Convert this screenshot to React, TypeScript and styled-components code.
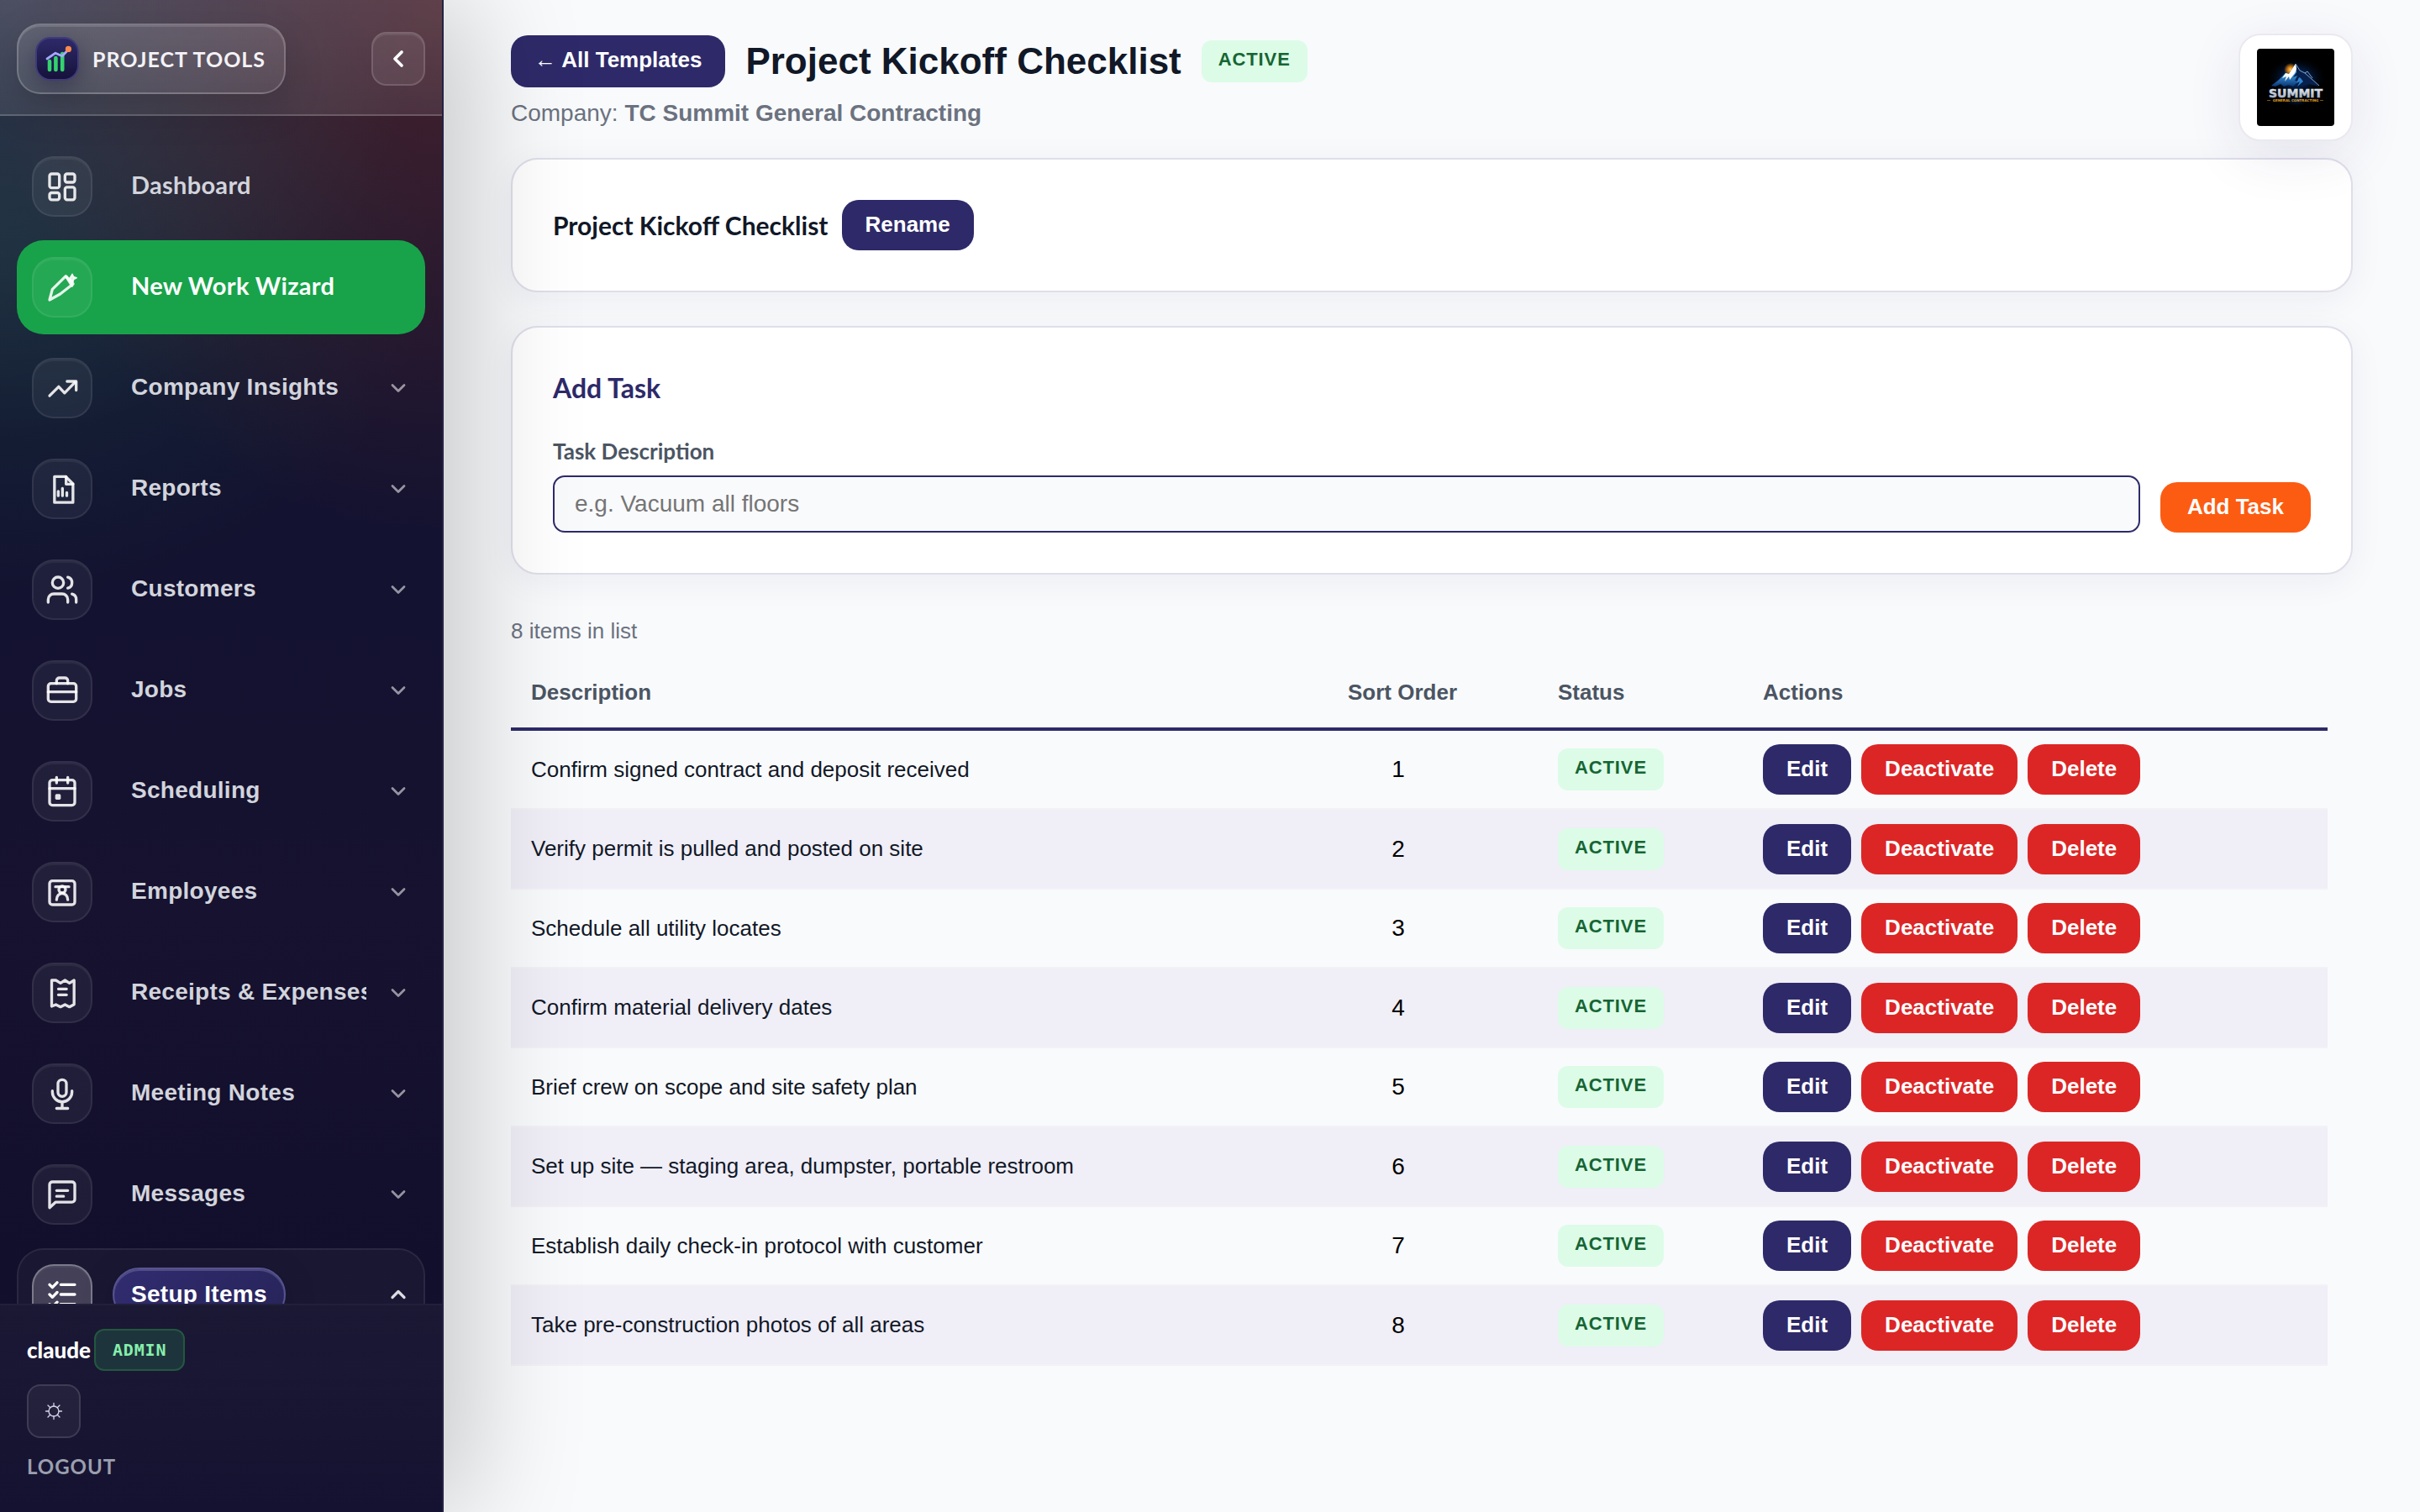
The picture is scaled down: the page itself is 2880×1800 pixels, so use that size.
import React from "react";
import styled, { createGlobalStyle, css } from "styled-components";

const sans = `"Liberation Sans", Arial, sans-serif`;
const display = `Lato, "Liberation Sans", sans-serif`;
const mono = `"DejaVu Sans Mono", monospace`;
const indigo = "#2e2a69";

const GlobalStyle = createGlobalStyle`
  *, *::before, *::after { box-sizing: border-box; }
  body { margin: 0; background: #f9fafc; color: #111827; font-family: ${sans}; }
  h1, h2, p { margin: 0; }
  button, input { font: inherit; }
`;

/* ---------- Shell ---------- */

const Shell = styled.div`
  display: flex;
  min-height: 100vh;
`;

const Sidebar = styled.aside`
  position: sticky;
  top: 0;
  z-index: 2;
  flex: 0 0 528px;
  min-width: 0;
  display: flex;
  flex-direction: column;
  height: 100vh;
  border-right: 2px solid #242245;
  background:
    radial-gradient(ellipse 500px 520px at 0 0, rgba(255, 255, 255, 0.11), transparent 100%),
    radial-gradient(ellipse 540px 640px at 100% 0, rgba(255, 92, 32, 0.21), transparent 100%),
    radial-gradient(ellipse 520px 420px at 0 300px, rgba(34, 190, 110, 0.13), transparent 100%),
    linear-gradient(180deg, #131230 0, #131230 720px, #16122f 60%, #120f2c 84%, #151231 100%);
  box-shadow: 32px 0 128px rgba(0, 0, 0, 0.2);
`;

const SidebarHeader = styled.div`
  display: flex;
  align-items: center;
  justify-content: space-between;
  padding: 28px 20px 24px;
  border-bottom: 2px solid rgba(255, 255, 255, 0.14);
  background: linear-gradient(180deg, rgba(255, 255, 255, 0.14), rgba(255, 255, 255, 0.09));
`;

const Brand = styled.a`
  display: flex;
  align-items: center;
  gap: 16px;
  padding: 14px 22px 14px 20px;
  border: 2px solid rgba(255, 255, 255, 0.2);
  border-radius: 28px;
  background: linear-gradient(180deg, rgba(255, 255, 255, 0.12), rgba(255, 255, 255, 0.08));
  box-shadow: 0 16px 48px rgba(0, 0, 0, 0.16), inset 0 2px 0 rgba(255, 255, 255, 0.12);
  color: #f3f2f6;
  font: 700 25px/32px ${display};
  letter-spacing: 0.04em;
  text-decoration: none;
`;

const BrandMark = styled.span`
  display: block;
  width: 52px;
  height: 52px;
  border: 2px solid #3f3b78;
  border-radius: 18px;
  background: linear-gradient(180deg, #2e2a69, #16123a);
  box-shadow: 0 8px 24px rgba(10, 8, 40, 0.3);

  svg { display: block; }
`;

const squareButton = css`
  display: flex;
  align-items: center;
  justify-content: center;
  width: 64px;
  height: 64px;
  padding: 0;
  border-radius: 18px;
`;

const CollapseButton = styled.button`
  ${squareButton}
  border: 2px solid rgba(255, 255, 255, 0.14);
  background: rgba(255, 255, 255, 0.08);
  box-shadow: inset 0 2px 0 rgba(255, 255, 255, 0.08);
  color: #fff;
`;

/* ---------- Navigation ---------- */

const Nav = styled.nav`
  flex: 1 1 0;
  min-height: 0;
  overflow: hidden;
  padding: 28px 20px 0;
`;

const NavList = styled.ul`
  display: flex;
  flex-direction: column;
  gap: 8px;
  margin: 0;
  padding: 0;
  list-style: none;
`;

const NavRow = styled.a<{ $highlight?: boolean }>`
  display: flex;
  align-items: center;
  gap: 24px;
  height: 112px;
  padding: 0 18px;
  border-radius: 32px;
  background: ${(p) => (p.$highlight ? "#18a34a" : "transparent")};
  color: ${(p) => (p.$highlight ? "#fff" : "#d2d4dc")};
  text-decoration: none;
`;

const NavGroup = styled.div`
  height: 440px;
  border: 2px solid rgba(255, 255, 255, 0.07);
  border-radius: 32px;
  background: rgba(255, 255, 255, 0.035);

  ${NavRow} {
    height: 106px;
    padding: 0 16px;
  }
`;

const NavIcon = styled.span<{ $active?: boolean }>`
  flex: none;
  display: flex;
  align-items: center;
  justify-content: center;
  width: 72px;
  height: 72px;
  border: 2px solid ${(p) => (p.$active ? "rgba(255,255,255,0.3)" : "rgba(255,255,255,0.08)")};
  border-radius: 26px;
  background: ${(p) => (p.$active ? "rgba(255,255,255,0.18)" : "rgba(255,255,255,0.055)")};
  box-shadow: inset 0 2px 0 rgba(255, 255, 255, 0.05);
  color: ${(p) => (p.$active ? "#fff" : "rgba(255,255,255,0.88)")};
`;

const NavLabel = styled.span<{ $face?: "display" }>`
  flex: 1 1 0;
  min-width: 0;
  overflow: hidden;
  padding: 0 0 ${(p) => (p.$face ? "4px" : "2px")} 22px;
  font-family: ${(p) => (p.$face ? display : sans)};
  font-size: ${(p) => (p.$face ? "29px" : "28px")};
  font-weight: 700;
  line-height: 40px;
  letter-spacing: 0.01em;
  white-space: nowrap;
`;

const NavPill = styled.span`
  padding: 10px 20px;
  border: 2px solid #575391;
  border-radius: 32px;
  background: linear-gradient(135deg, #312c70, #27245a);
  box-shadow: 0 8px 40px rgba(0, 0, 0, 0.2), inset 0 2px 0 rgba(255, 255, 255, 0.16);
  color: #fff;
  font-size: 28px;
  font-weight: 700;
  line-height: 40px;
  letter-spacing: 0.01em;
`;

const Spacer = styled.span`
  flex: 1;
`;

const Chevron = styled.span<{ $strong?: boolean }>`
  flex: none;
  display: flex;
  color: ${(p) => (p.$strong ? "rgba(255,255,255,0.85)" : "rgba(255,255,255,0.55)")};
`;

/* ---------- Sidebar footer ---------- */

const SidebarFooter = styled.div`
  display: flex;
  flex-direction: column;
  align-items: flex-start;
  gap: 16px;
  padding: 28px 32px 36px;
  border-top: 2px solid rgba(255, 255, 255, 0.07);
  background: linear-gradient(180deg, rgba(255, 255, 255, 0.04), rgba(255, 255, 255, 0));
`;

const UserLine = styled.div`
  display: flex;
  align-items: center;
  gap: 4px;
  color: #fff;
  font: 900 26px/50px ${display};
`;

const RoleBadge = styled.span`
  padding: 0 20px;
  border: 2px solid #23583f;
  border-radius: 12px;
  background: #1e343c;
  color: #86efac;
  font: 700 20px/46px ${mono};
  letter-spacing: 0.04em;
`;

const ThemeButton = styled.button`
  ${squareButton}
  border: 2px solid rgba(255, 255, 255, 0.12);
  border-radius: 16px;
  background: rgba(255, 255, 255, 0.05);
  color: #d6d3ea;
`;

const Logout = styled.a`
  color: #9b9fae;
  font: 700 24px/36px ${display};
  letter-spacing: 0.04em;
  text-decoration: none;
`;

/* ---------- Page ---------- */

const Main = styled.main`
  flex: 1;
  min-width: 0;
  padding: 40px 80px;
`;

const PageHeader = styled.header`
  display: flex;
  align-items: center;
  justify-content: space-between;
  margin-bottom: 20px;
`;

const TitleBlock = styled.div`
  display: flex;
  flex-direction: column;
  gap: 10px;
  padding-bottom: 10px;
`;

const TitleRow = styled.div`
  display: flex;
  align-items: center;
  gap: 24px;
`;

const PageTitle = styled.h1`
  font-size: 44px;
  font-weight: 700;
  line-height: 52px;
`;

const Company = styled.p`
  color: #6b7280;
  font-size: 28px;
  line-height: 42px;
`;

const tones = { primary: indigo, danger: "#dc2626", accent: "#fc5c12" };

const buttonLook = css<{ $tone?: keyof typeof tones }>`
  display: inline-block;
  padding: 14px 28px 16px;
  border: 0;
  border-radius: 20px;
  background: ${(p) => tones[p.$tone ?? "primary"]};
  color: #fff;
  font: 700 26px/30px ${sans};
  white-space: nowrap;
`;

const Button = styled.button<{ $tone?: keyof typeof tones }>`
  ${buttonLook}
`;

const BackLink = styled.a`
  ${buttonLook}
  padding-bottom: 18px;
  text-decoration: none;
`;

const StatusBadge = styled.span`
  display: inline-block;
  vertical-align: middle;
  padding: 10px 20px 14px;
  border-radius: 12px;
  background: #dcfce7;
  color: #166534;
  font-size: 22px;
  font-weight: 700;
  line-height: 26px;
  letter-spacing: 0.04em;
`;

const LogoCard = styled.div`
  position: relative;
  z-index: 1;
  padding: 16px 20px;
  border: 2px solid #eae9f0;
  border-radius: 26px;
  background: #fff;
  box-shadow: 0 16px 64px rgba(46, 42, 105, 0.1);

  svg { display: block; border-radius: 4px; }
`;

const Card = styled.section`
  margin-bottom: 40px;
  padding: 48px;
  border: 2px solid #dfdeea;
  border-radius: 32px;
  background: #fff;
  box-shadow: 0 8px 40px rgba(30, 27, 75, 0.06);
`;

const TemplateLine = styled.div`
  display: flex;
  align-items: center;
  gap: 16px;
`;

const TemplateName = styled.h2`
  font: 700 30px/40px ${display};
`;

const CardTitle = styled.h2`
  margin-bottom: 32px;
  color: ${indigo};
  font: 700 32px/48px ${display};
`;

const TaskForm = styled.form`
  display: flex;
  align-items: flex-end;
  gap: 24px;

  ${Button} {
    padding-left: 32px;
    padding-right: 32px;
  }
`;

const Field = styled.div`
  flex: 1;
  display: flex;
  flex-direction: column;
  gap: 10px;
`;

const FieldLabel = styled.label`
  color: #4b5563;
  font: 700 26px/38px ${display};
`;

const TextInput = styled.input`
  width: 100%;
  height: 68px;
  padding: 0 24px;
  border: 2px solid ${indigo};
  border-radius: 14px;
  background: #f9fafc;
  font-size: 28px;

  &::placeholder { color: #757575; }
`;

const ListCount = styled.p`
  margin-top: 48px;
  color: #6b7280;
  font-size: 26px;
  line-height: 38px;
`;

/* ---------- Task table ---------- */

const TableWrap = styled.div`
  padding: 16px 30px 0 0;
`;

const Table = styled.table`
  width: 100%;
  border-collapse: separate;
  border-spacing: 0;
  table-layout: fixed;
  font-size: 26px;
`;

const Col = styled.col<{ $width?: number }>`
  width: ${(p) => (p.$width ? `${p.$width}px` : "auto")};
`;

const Th = styled.th`
  padding: 18px 24px 22px;
  border-bottom: 4px solid ${indigo};
  color: #4b5563;
  font-weight: 700;
  line-height: 40px;
  text-align: left;
`;

const Td = styled.td`
  padding: 0 24px;
  border-bottom: 2px solid #f2f2f6;
`;

const Tr = styled.tr`
  height: 94px;

  &:nth-child(even) {
    height: 95px;
    background: #f0eef7;
  }
`;

const SortNumber = styled.span`
  display: block;
  width: 120px;
  color: #000;
  font-size: 28px;
  text-align: center;
`;

const Actions = styled.div`
  display: flex;
  gap: 12px;
`;

/* ---------- Icons ---------- */

function Icon({ size = 40, weight = 2, children }: { size?: number; weight?: number; children: React.ReactNode }) {
  return (
    <svg
      width={size}
      height={size}
      viewBox="0 0 24 24"
      fill="none"
      stroke="currentColor"
      strokeWidth={weight}
      strokeLinecap="round"
      strokeLinejoin="round"
      aria-hidden="true"
    >
      {children}
    </svg>
  );
}

const icons = {
  dashboard: (
    <>
      <rect x="3" y="3" width="7" height="10" rx="1.5" />
      <rect x="14" y="3" width="7" height="6" rx="1.5" />
      <rect x="14" y="12.5" width="7" height="9" rx="1.5" />
      <rect x="3" y="16.5" width="7" height="5" rx="1.5" />
    </>
  ),
  wizard: (
    <>
      <path d="M3 21l2-7.6L14.6 4l5.2 5.6-9.2 7.2L3 21z" />
      <path d="M15 4.6l4 6.2" />
      <path d="M19.2 2.6l.9 2 2.2.7-2.1 1-.6 2.2-1.3-1.8-2.2-.1 1.7-1.6z" fill="currentColor" strokeWidth="1" />
    </>
  ),
  insights: (
    <>
      <path d="M3 17.5l6.5-6.5 4.2 4.5L21 8" />
      <path d="M15.5 7.2H22v6.3" />
    </>
  ),
  reports: (
    <>
      <path d="M14.5 3.2H6.5v18.5h13.2V8.4z" />
      <path d="M14.8 3.2v5.4h4.9" />
      <path d="M9.2 13.7v3.2M12.2 11.7v5.2M15.3 14.7v2.2" />
    </>
  ),
  customers: (
    <>
      <path d="M16 21v-2a4 4 0 0 0-4-4H6a4 4 0 0 0-4 4v2" />
      <circle cx="9" cy="7" r="4" />
      <path d="M22 21v-2a4 4 0 0 0-3-3.87" />
      <path d="M16 3.13a4 4 0 0 1 0 7.75" />
    </>
  ),
  jobs: (
    <>
      <rect x="2" y="7" width="20" height="13" rx="2" />
      <path d="M8 7V5a2 2 0 0 1 2-2h4a2 2 0 0 1 2 2v2M2 13h20" />
    </>
  ),
  scheduling: (
    <>
      <rect x="3" y="4" width="18" height="18" rx="2" />
      <path d="M8 2v4M16 2v4M3 10h18" />
      <rect x="8" y="15" width="2" height="2" />
    </>
  ),
  employees: (
    <>
      <rect x="3" y="4" width="18" height="17" rx="2" />
      <circle cx="12" cy="10.2" r="2.4" />
      <path d="M8 17.5c0-2.7 1.8-4.6 4-4.6s4 1.9 4 4.6M7.2 8.2h9.6" />
    </>
  ),
  receipts: (
    <>
      <path d="M4.5 3h3l3.3 2L14 3l3.2 2 3.3-2v17.2L17.2 22 14 20.4 10.8 22l-3.3-1.6-3 1.2z" />
      <path d="M9.3 9.2h5.8M9.3 13.4h5.8" />
    </>
  ),
  notes: (
    <>
      <rect x="9" y="2" width="6" height="12" rx="3" />
      <path d="M5 10v.8a7 7 0 0 0 14 0V10M12 18v4.5M8 22.5h8" />
    </>
  ),
  messages: (
    <>
      <path d="M21 15.5a2 2 0 0 1-2 2H7.2L3 21.4V5a2 2 0 0 1 2-2h14a2 2 0 0 1 2 2z" />
      <path d="M8 9.2h8M8 13.3h5" />
    </>
  ),
  setup: (
    <>
      <path d="M3 5l2 2 3.4-3.5M3 12l2 2 3.4-3.5M3 19l2 2 3.4-3.5" />
      <path d="M11 5h10M11 12h10M11 19h10" />
    </>
  ),
};

function BrandLogo() {
  return (
    <svg width="48" height="48" viewBox="0 0 48 48" fill="none" aria-hidden="true">
      <path d="M15 27v10M22.4 23v14M30.2 18v19" stroke="#34d36e" strokeWidth="4.6" strokeLinecap="round" />
      <path d="M12 24l10-6.8 8 3.6 6-6.3" stroke="#a5a8ff" strokeWidth="2.8" strokeLinecap="round" strokeLinejoin="round" />
      <circle cx="37.4" cy="12.4" r="3.6" fill="#ff8a4c" />
    </svg>
  );
}

function SummitLogo() {
  return (
    <svg width="92" height="92" viewBox="0 0 92 92" role="img" aria-label="Summit General Contracting">
      <defs>
        <radialGradient id="blueGlow">
          <stop offset="0" stopColor="#0b4fb0" stopOpacity="0.9" />
          <stop offset="0.5" stopColor="#062a66" stopOpacity="0.5" />
          <stop offset="1" stopColor="#000" stopOpacity="0" />
        </radialGradient>
        <radialGradient id="sunGlow">
          <stop offset="0" stopColor="#ffd27a" />
          <stop offset="0.4" stopColor="#f28c0c" stopOpacity="0.9" />
          <stop offset="1" stopColor="#f28c0c" stopOpacity="0" />
        </radialGradient>
        <linearGradient id="steel" x1="0" y1="0" x2="0" y2="1">
          <stop offset="0" stopColor="#f1f3f8" />
          <stop offset="1" stopColor="#94a3c0" />
        </linearGradient>
        <linearGradient id="rock" x1="0" y1="0" x2="0" y2="1">
          <stop offset="0" stopColor="#d8f0ff" />
          <stop offset="0.45" stopColor="#3d9be0" />
          <stop offset="1" stopColor="#0a3474" />
        </linearGradient>
      </defs>
      <rect width="92" height="92" fill="#000" />
      <ellipse cx="47" cy="35" rx="36" ry="25" fill="url(#blueGlow)" />
      <ellipse cx="47" cy="62" rx="18" ry="7" fill="url(#blueGlow)" opacity="0.5" />
      <circle cx="40" cy="25" r="8" fill="url(#sunGlow)" />
      <path d="M17 45l9-8 8-8 4 1 8-12 5 8 6 3 8 7 9 9-12-3-8 3-8-3-8 3-9-4z" fill="#07204c" />
      <path d="M17 44l9-7 8-8 4 1 8-12 1 10-4 6 5-2-3 6 4 1-6 6-5-2-6 2-4-3-6 3z" fill="url(#rock)" />
      <path d="M46 18l-8 12-4-1-4 6 5-2-2 6 5-6 1 4 6-8 2-5z" fill="#fff" />
      <path d="M46 18l5 8 6 3 8 7 9 8M57 29l3-2 6 8" fill="none" stroke="#8fb4e0" strokeWidth="0.9" />
      <path d="M50 34l-3 7 4-2-3 6 7-6-3-4z" fill="#2d83d0" />
      <text
        x="14"
        y="58"
        fontFamily="DejaVu Sans, sans-serif"
        fontSize="14"
        fontWeight="700"
        fill="url(#steel)"
        stroke="url(#steel)"
        strokeWidth="0.5"
      >
        SUMMIT
      </text>
      <text x="46" y="63" textAnchor="middle" fontFamily="DejaVu Sans, sans-serif" fontSize="4" fontWeight="700" fill="#e0a020">
        GENERAL CONTRACTING
      </text>
      <path d="M12 61.5h4M75 61.5h4" stroke="#b87a10" strokeWidth="0.7" />
    </svg>
  );
}

/* ---------- Data ---------- */

type NavEntry = { label: string; icon: keyof typeof icons; kind?: "link" | "highlight" };

const navEntries: NavEntry[] = [
  { label: "Dashboard", icon: "dashboard", kind: "link" },
  { label: "New Work Wizard", icon: "wizard", kind: "highlight" },
  { label: "Company Insights", icon: "insights" },
  { label: "Reports", icon: "reports" },
  { label: "Customers", icon: "customers" },
  { label: "Jobs", icon: "jobs" },
  { label: "Scheduling", icon: "scheduling" },
  { label: "Employees", icon: "employees" },
  { label: "Receipts & Expenses", icon: "receipts" },
  { label: "Meeting Notes", icon: "notes" },
  { label: "Messages", icon: "messages" },
];

const tasks = [
  "Confirm signed contract and deposit received",
  "Verify permit is pulled and posted on site",
  "Schedule all utility locates",
  "Confirm material delivery dates",
  "Brief crew on scope and site safety plan",
  "Set up site — staging area, dumpster, portable restroom",
  "Establish daily check-in protocol with customer",
  "Take pre-construction photos of all areas",
];

/* ---------- App ---------- */

export default function App() {
  return (
    <>
      <GlobalStyle />
      <Shell>
        <Sidebar>
          <SidebarHeader>
            <Brand href="#">
              <BrandMark>
                <BrandLogo />
              </BrandMark>
              PROJECT TOOLS
            </Brand>
            <CollapseButton type="button" aria-label="Collapse sidebar">
              <Icon size={32} weight={2.8}>
                <path d="M15 6l-6 6 6 6" />
              </Icon>
            </CollapseButton>
          </SidebarHeader>

          <Nav>
            <NavList>
              {navEntries.map(({ label, icon, kind }) => (
                <li key={label}>
                  <NavRow href="#" $highlight={kind === "highlight"}>
                    <NavIcon>
                      <Icon>{icons[icon]}</Icon>
                    </NavIcon>
                    <NavLabel $face={kind ? "display" : undefined}>{label}</NavLabel>
                    {!kind && (
                      <Chevron>
                        <Icon size={28} weight={2.4}>
                          <path d="M6 9l6 6 6-6" />
                        </Icon>
                      </Chevron>
                    )}
                  </NavRow>
                </li>
              ))}
              <li>
                <NavGroup>
                  <NavRow href="#" aria-expanded="true">
                    <NavIcon $active>
                      <Icon>{icons.setup}</Icon>
                    </NavIcon>
                    <NavPill>Setup Items</NavPill>
                    <Spacer />
                    <Chevron $strong>
                      <Icon size={28} weight={2.8}>
                        <path d="M6 15l6-6 6 6" />
                      </Icon>
                    </Chevron>
                  </NavRow>
                </NavGroup>
              </li>
            </NavList>
          </Nav>

          <SidebarFooter>
            <UserLine>
              claude <RoleBadge>ADMIN</RoleBadge>
            </UserLine>
            <ThemeButton type="button" aria-label="Toggle theme">
              <Icon size={24} weight={1.3}>
                <circle cx="12" cy="12" r="6" />
                <path d="M12 6V2.5M12 18v3.5M6 12H2.5M18 12h3.5M7.8 7.8L5 5M16.2 16.2L19 19M7.8 16.2L5 19M16.2 7.8L19 5" />
              </Icon>
            </ThemeButton>
            <Logout href="#">LOGOUT</Logout>
          </SidebarFooter>
        </Sidebar>

        <Main>
          <PageHeader>
            <TitleBlock>
              <TitleRow>
                <BackLink href="#">← All Templates</BackLink>
                <PageTitle>Project Kickoff Checklist</PageTitle>
                <StatusBadge>ACTIVE</StatusBadge>
              </TitleRow>
              <Company>
                Company: <strong>TC Summit General Contracting</strong>
              </Company>
            </TitleBlock>
            <LogoCard>
              <SummitLogo />
            </LogoCard>
          </PageHeader>

          <Card>
            <TemplateLine>
              <TemplateName>Project Kickoff Checklist</TemplateName>
              <Button type="button">Rename</Button>
            </TemplateLine>
          </Card>

          <Card>
            <CardTitle>Add Task</CardTitle>
            <TaskForm onSubmit={(e) => e.preventDefault()}>
              <Field>
                <FieldLabel htmlFor="task-description">Task Description</FieldLabel>
                <TextInput id="task-description" type="text" placeholder="e.g. Vacuum all floors" />
              </Field>
              <Button type="submit" $tone="accent">
                Add Task
              </Button>
            </TaskForm>
          </Card>

          <ListCount>8 items in list</ListCount>
          <TableWrap>
            <Table>
              <colgroup>
                <Col />
                <Col $width={250} />
                <Col $width={244} />
                <Col $width={696} />
              </colgroup>
              <thead>
                <tr>
                  <Th>Description</Th>
                  <Th>Sort Order</Th>
                  <Th>Status</Th>
                  <Th>Actions</Th>
                </tr>
              </thead>
              <tbody>
                {tasks.map((task, i) => (
                  <Tr key={task}>
                    <Td>{task}</Td>
                    <Td>
                      <SortNumber>{i + 1}</SortNumber>
                    </Td>
                    <Td>
                      <StatusBadge>ACTIVE</StatusBadge>
                    </Td>
                    <Td>
                      <Actions>
                        <Button type="button">Edit</Button>
                        <Button type="button" $tone="danger">
                          Deactivate
                        </Button>
                        <Button type="button" $tone="danger">
                          Delete
                        </Button>
                      </Actions>
                    </Td>
                  </Tr>
                ))}
              </tbody>
            </Table>
          </TableWrap>
        </Main>
      </Shell>
    </>
  );
}
